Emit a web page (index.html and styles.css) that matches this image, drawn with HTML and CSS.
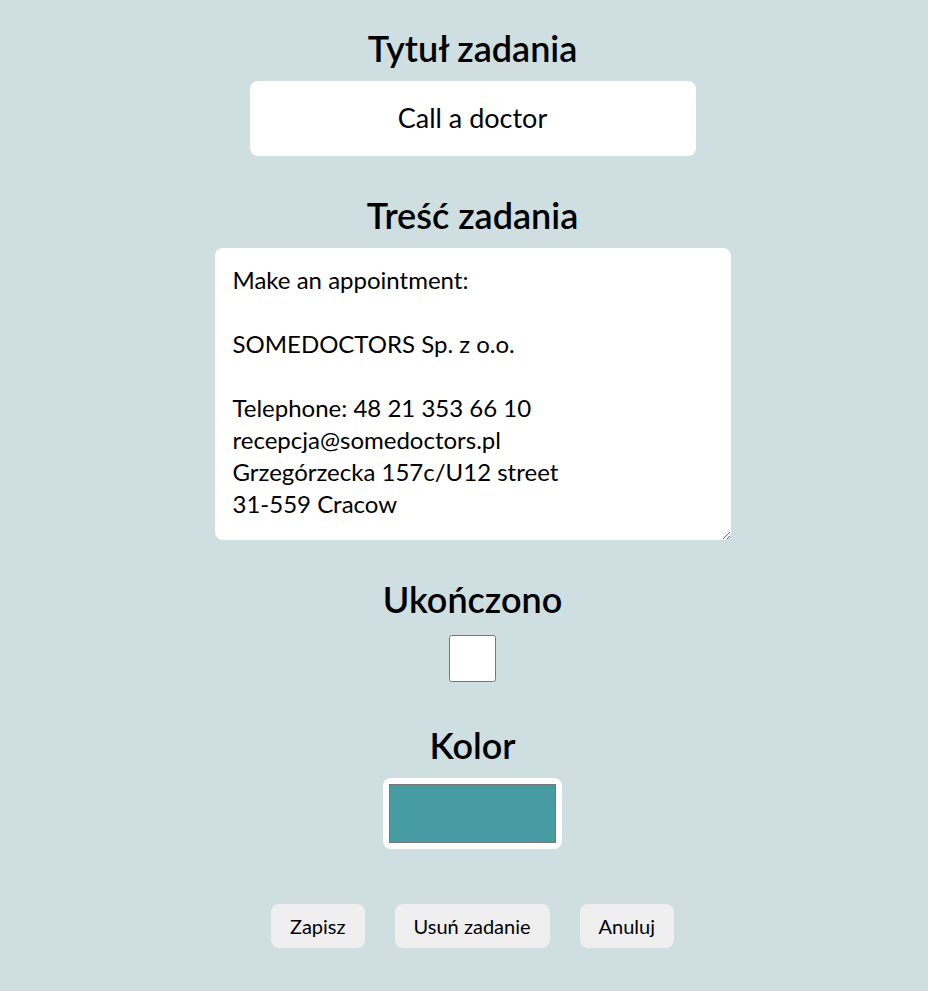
FILE: index.html
```html
<!DOCTYPE html>
<html lang="pl">
<head>
<meta charset="utf-8">
<title>Edycja zadania</title>
<link rel="stylesheet" href="styles.css">
</head>
<body>
<form class="task-form">
  <section class="field">
    <h2 class="field-title">Tytuł zadania</h2>
    <input class="title-input" type="text" value="Call a doctor">
  </section>
  <section class="field">
    <h2 class="field-title">Treść zadania</h2>
    <textarea class="body-input">Make an appointment:

SOMEDOCTORS Sp. z o.o.

Telephone: 48 21 353 66 10
recepcja@somedoctors.pl
Grzegórzecka 157c/U12 street
31-559 Cracow</textarea>
  </section>
  <section class="field">
    <h2 class="field-title">Ukończono</h2>
    <input class="done-input" type="checkbox">
  </section>
  <section class="field">
    <h2 class="field-title">Kolor</h2>
    <input class="color-input" type="color" value="#479ca3">
  </section>
  <div class="actions">
    <button type="button" class="btn">Zapisz</button>
    <button type="button" class="btn">Usuń zadanie</button>
    <button type="button" class="btn">Anuluj</button>
  </div>
</form>
</body>
</html>
```
FILE: styles.css
```css
html, body {
  margin: 0;
  padding: 0;
  background: #cfdee1;
}
body {
  font-family: "Lato", "Noto Sans", sans-serif;
  color: #000;
  min-height: 991px;
}
.task-form {
  display: flex;
  flex-direction: column;
  align-items: center;
  padding-top: 26px;
  padding-left: 17px;
}
.field {
  display: flex;
  flex-direction: column;
  align-items: center;
  margin-bottom: 37px;
}
.field-title {
  margin: 0 0 11px;
  font-size: 36px;
  line-height: 44px;
  font-weight: 600;
}
.title-input {
  box-sizing: border-box;
  width: 446px;
  height: 75px;
  border: none;
  border-radius: 8px;
  background: #fff;
  font-family: inherit;
  font-size: 27px;
  line-height: 1;
  padding: 0 0 2px;
  text-align: center;
  color: #000;
  outline: none;
}
.body-input {
  box-sizing: border-box;
  width: 516px;
  height: 292px;
  padding: 16px 18px 20px;
  border: none;
  border-radius: 8px;
  background: #fff;
  font-family: inherit;
  font-size: 24px;
  line-height: 32px;
  color: #000;
  outline: none;
  overflow: hidden;
}
.done-input {
  width: 47px;
  height: 47px;
  margin: 3px 0 4px;
}
.color-input {
  box-sizing: border-box;
  width: 179px;
  height: 71px;
  padding: 6px;
  border: none;
  border-radius: 8px;
  background: #fff;
  cursor: pointer;
}
.color-input::-webkit-color-swatch-wrapper {
  padding: 0;
}
.color-input::-webkit-color-swatch {
  border: 1px solid #777;
  border-radius: 0;
}
.actions {
  display: flex;
  gap: 30px;
  margin-top: 18px;
}
.btn {
  height: 44px;
  padding: 0 19px;
  border: none;
  border-radius: 8px;
  background: #efefef;
  font-family: inherit;
  font-size: 20px;
  font-weight: 400;
  color: #000;
}
```
